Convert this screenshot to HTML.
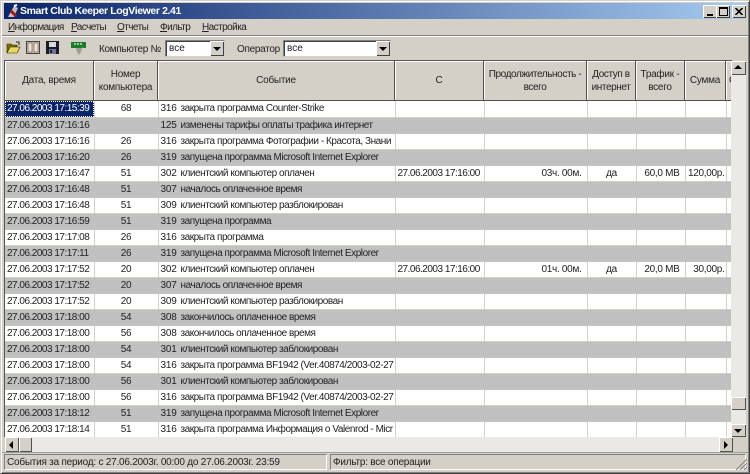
<!DOCTYPE html>
<html lang="ru"><head><meta charset="utf-8"><title>Smart Club Keeper LogViewer 2.41</title>
<style>
*{box-sizing:border-box}
html,body{margin:0;padding:0;background:#d4d0c8}
body{width:750px;height:474px;overflow:hidden;position:relative;font:10px "Liberation Sans",sans-serif;color:#222}
.a{position:absolute}
.win{left:0;top:0;width:750px;height:474px;background:#d4d0c8;border:1px solid #d4d0c8;border-right-color:#404040;border-bottom-color:#404040;box-shadow:inset 1px 1px 0 #fff,inset -1px -1px 0 #808080}
.title{left:4px;top:3px;width:742px;height:16px;background:linear-gradient(90deg,#0a246a,#a6caf0)}
.title span{position:absolute;left:16px;top:1px;color:#fff;font:bold 10.5px "Liberation Sans",sans-serif;letter-spacing:-.4px;line-height:14px;white-space:nowrap}
.cap{top:5px;width:14px;height:13px;background:#d4d0c8;box-shadow:inset 1px 1px 0 #fff,inset -1px -1px 0 #404040}
.menu span{position:absolute;top:21px;font-size:10px;letter-spacing:-.55px;line-height:13px;white-space:nowrap;color:#222}
.menu u{text-decoration:underline}
.hl{left:2px;width:746px;height:1px;background:#808080}
.hw{left:2px;width:746px;height:1px;background:#fff}
.lbl{top:43px;font-size:10px;letter-spacing:-.3px;line-height:13px;white-space:nowrap}
.combo{top:40px;height:17px;background:#fff;border:1px solid #808080;border-right-color:#d4d0c8;border-bottom-color:#d4d0c8;box-shadow:inset 1px 1px 0 #404040;font-size:10px;line-height:14px;padding:1px 0 0 3px}
.cb{top:41px;width:14px;height:15px;background:#d4d0c8;box-shadow:inset 1px 1px 0 #fff,inset -1px -1px 0 #404040}
.tri{position:absolute;width:0;height:0}
.down{border-left:4px solid transparent;border-right:4px solid transparent;border-top:4px solid #000}
.up{border-left:4px solid transparent;border-right:4px solid transparent;border-bottom:4px solid #000}
.left{border-top:4px solid transparent;border-bottom:4px solid transparent;border-right:4px solid #000}
.right{border-top:4px solid transparent;border-bottom:4px solid transparent;border-left:4px solid #000}
.gridbox{left:4px;top:60px;width:728px;height:377px;overflow:hidden;background:#d4d0c8;border-top:1px solid #555;border-left:1px solid #555}
.h{position:absolute;top:0;height:40px;background:#d4d0c8;border-right:1px solid #505050;border-bottom:1px solid #505050;box-shadow:inset 1px 1px 0 #fff;display:flex;align-items:center;justify-content:center;text-align:center;font-size:10px;letter-spacing:-.25px;line-height:13px;color:#222;overflow:hidden;white-space:nowrap}
table{position:absolute;left:0;top:40px;border-collapse:collapse;table-layout:fixed;width:727px}
td{height:16px;padding:0 2px;font-size:10px;letter-spacing:-.3px;line-height:15px;white-space:nowrap;overflow:hidden;border-right:1px solid #d4d0c8;border-bottom:1px solid #d4d0c8;background:#fff;color:#222}
td:first-child,td:nth-child(4){letter-spacing:-.5px}
tr.g td{background:#c0c0c0;border-right-color:#c0c0c0;border-bottom-color:#c4c4c4}
td.c{text-align:center}
td.r{text-align:right;padding-right:5px}
td.e{padding-left:2px;letter-spacing:-.45px}
td.e b{display:inline-block;width:20px;font-weight:normal;letter-spacing:-.2px}
td.sel{background:#0a246a;color:#fff;outline:1px dotted #fff;outline-offset:-1px;padding-left:2px}
.dither{background:#ebe9e5}
.btn{background:#d4d0c8;box-shadow:inset 1px 1px 0 #fff,inset -1px -1px 0 #505050}
.sunk{top:454px;height:16px;border:1px solid #808080;border-right-color:#fff;border-bottom-color:#fff;font-size:10px;letter-spacing:-.23px;line-height:13px;padding:1px 0 0 2px;white-space:nowrap;overflow:hidden;color:#222}
.wrap{filter:blur(.35px);position:absolute;left:0;top:0;width:750px;height:474px}
</style></head><body><div class="wrap">
<div class="a win"></div>
<div class="a title"><span>Smart Club Keeper LogViewer 2.41</span>
<svg class="a" style="left:2px;top:0" width="14" height="16" viewBox="0 0 14 16"><path d="M2 14 L8 3 L12 5 L8 14Z" fill="#c8c0c0"/><path d="M5 8 L10 13" stroke="#a01818" stroke-width="3"/><path d="M8 3 L11 2" stroke="#fff" stroke-width="2"/></svg></div>
<div class="a cap" style="left:703px"><div class="a" style="left:4px;top:9px;width:6px;height:2px;background:#000"></div></div>
<div class="a cap" style="left:716px"><div class="a" style="left:3px;top:2px;width:9px;height:9px;border:1px solid #000;border-top-width:2px"></div></div>
<div class="a cap" style="left:732px"><svg class="a" style="left:3px;top:3px" width="8" height="7" viewBox="0 0 8 7"><path d="M0.5 0 L7.5 7 M7.5 0 L0.5 7" stroke="#000" stroke-width="1.6"/></svg></div>
<div class="menu">
<span style="left:8px"><u>И</u>нформация</span>
<span style="left:71px"><u>Р</u>асчеты</span>
<span style="left:117px"><u>О</u>тчеты</span>
<span style="left:160px"><u>Ф</u>ильтр</span>
<span style="left:202px"><u>Н</u>астройка</span>
</div>
<div class="a hl" style="top:35px"></div><div class="a hw" style="top:36px"></div>
<svg class="a" style="left:6px;top:41px" width="15" height="13" viewBox="0 0 15 13"><path d="M1 12V3h4l1 1h5v2H4L1 12Z" fill="#807000" stroke="#302800" stroke-width=".6"/><path d="M1 12L4 6h10l-3 6Z" fill="#e8d860" stroke="#302800" stroke-width=".6"/><path d="M10 1l3 0 0 3" fill="none" stroke="#222" stroke-width="1"/></svg>
<svg class="a" style="left:26px;top:41px" width="14" height="13" viewBox="0 0 14 13"><rect x=".5" y=".5" width="13" height="12" fill="#c8c4b8" stroke="#444"/><rect x="2" y="2" width="4" height="9" fill="#e8e4d8" stroke="#806050" stroke-width=".7"/><rect x="8" y="2" width="4" height="9" fill="#e8e4d8" stroke="#806050" stroke-width=".7"/></svg>
<svg class="a" style="left:46px;top:41px" width="13" height="13" viewBox="0 0 13 13"><rect width="13" height="13" fill="#1c1c24"/><rect x="3" y="1" width="7" height="5" fill="#d8d8e0"/><rect x="3" y="8" width="7" height="5" fill="#7070a0"/><rect x="4" y="9" width="2" height="3" fill="#222"/></svg>
<svg class="a" style="left:71px;top:41px" width="15" height="15" viewBox="0 0 15 15"><rect x="0" y="1" width="15" height="6" fill="#1c7a2c"/><path d="M3 3h9" stroke="#b8e8b8" stroke-width="1.5" stroke-dasharray="2 1"/><path d="M5 7h6l-1 4-2 3-2-3Z" fill="#9aa090"/><path d="M11 6l2 2-2 2" fill="#c8c8c8"/></svg>
<div class="a lbl" style="left:99px">Компьютер №</div>
<div class="a combo" style="left:165px;width:60px">все</div>
<div class="a cb" style="left:210px"><div class="tri down" style="left:3px;top:6px"></div></div>
<div class="a lbl" style="left:237px">Оператор</div>
<div class="a combo" style="left:283px;width:108px">все</div>
<div class="a cb" style="left:376px"><div class="tri down" style="left:3px;top:6px"></div></div>

<div class="a gridbox">
<div class="h" style="left:0;width:89px">Дата, время</div>
<div class="h" style="left:89px;width:64px">Номер<br>компьютера</div>
<div class="h" style="left:153px;width:237px">Событие</div>
<div class="h" style="left:390px;width:89px">С</div>
<div class="h" style="left:479px;width:103px;letter-spacing:-.4px">Продолжительность -<br>всего</div>
<div class="h" style="left:582px;width:49px;letter-spacing:-.4px">Доступ в<br>интернет</div>
<div class="h" style="left:631px;width:49px">Трафик -<br>всего</div>
<div class="h" style="left:680px;width:41px">Сумма</div>
<div class="h" style="left:721px;width:20px;justify-content:flex-start;padding-left:3px">С</div>
<table>
<colgroup><col style="width:89px"><col style="width:64px"><col style="width:237px"><col style="width:89px"><col style="width:103px"><col style="width:49px"><col style="width:49px"><col style="width:41px"><col style="width:6px"></colgroup>
<tr><td class="sel">27.06.2003 17:15:39</td><td class="c">68</td><td class="e"><b>316</b>закрыта программа Counter-Strike</td><td></td><td></td><td></td><td></td><td></td><td></td></tr>
<tr class="g"><td>27.06.2003 17:16:16</td><td class="c"></td><td class="e"><b>125</b>изменены тарифы оплаты трафика интернет</td><td></td><td></td><td></td><td></td><td></td><td></td></tr>
<tr><td>27.06.2003 17:16:16</td><td class="c">26</td><td class="e"><b>316</b>закрыта программа Фотографии - Красота, Знани</td><td></td><td></td><td></td><td></td><td></td><td></td></tr>
<tr class="g"><td>27.06.2003 17:16:20</td><td class="c">26</td><td class="e"><b>319</b>запущена программа Microsoft Internet Explorer</td><td></td><td></td><td></td><td></td><td></td><td></td></tr>
<tr><td>27.06.2003 17:16:47</td><td class="c">51</td><td class="e"><b>302</b>клиентский компьютер оплачен</td><td>27.06.2003 17:16:00</td><td class="r">03ч. 00м.</td><td class="c">да</td><td class="r">60,0 MB</td><td class="r" style="padding-right:1px">120,00р.</td><td></td></tr>
<tr class="g"><td>27.06.2003 17:16:48</td><td class="c">51</td><td class="e"><b>307</b>началось оплаченное время</td><td></td><td></td><td></td><td></td><td></td><td></td></tr>
<tr><td>27.06.2003 17:16:48</td><td class="c">51</td><td class="e"><b>309</b>клиентский компьютер разблокирован</td><td></td><td></td><td></td><td></td><td></td><td></td></tr>
<tr class="g"><td>27.06.2003 17:16:59</td><td class="c">51</td><td class="e"><b>319</b>запущена программа</td><td></td><td></td><td></td><td></td><td></td><td></td></tr>
<tr><td>27.06.2003 17:17:08</td><td class="c">26</td><td class="e"><b>316</b>закрыта программа</td><td></td><td></td><td></td><td></td><td></td><td></td></tr>
<tr class="g"><td>27.06.2003 17:17:11</td><td class="c">26</td><td class="e"><b>319</b>запущена программа Microsoft Internet Explorer</td><td></td><td></td><td></td><td></td><td></td><td></td></tr>
<tr><td>27.06.2003 17:17:52</td><td class="c">20</td><td class="e"><b>302</b>клиентский компьютер оплачен</td><td>27.06.2003 17:16:00</td><td class="r">01ч. 00м.</td><td class="c">да</td><td class="r">20,0 MB</td><td class="r" style="padding-right:1px">30,00р.</td><td></td></tr>
<tr class="g"><td>27.06.2003 17:17:52</td><td class="c">20</td><td class="e"><b>307</b>началось оплаченное время</td><td></td><td></td><td></td><td></td><td></td><td></td></tr>
<tr><td>27.06.2003 17:17:52</td><td class="c">20</td><td class="e"><b>309</b>клиентский компьютер разблокирован</td><td></td><td></td><td></td><td></td><td></td><td></td></tr>
<tr class="g"><td>27.06.2003 17:18:00</td><td class="c">54</td><td class="e"><b>308</b>закончилось оплаченное время</td><td></td><td></td><td></td><td></td><td></td><td></td></tr>
<tr><td>27.06.2003 17:18:00</td><td class="c">56</td><td class="e"><b>308</b>закончилось оплаченное время</td><td></td><td></td><td></td><td></td><td></td><td></td></tr>
<tr class="g"><td>27.06.2003 17:18:00</td><td class="c">54</td><td class="e"><b>301</b>клиентский компьютер заблокирован</td><td></td><td></td><td></td><td></td><td></td><td></td></tr>
<tr><td>27.06.2003 17:18:00</td><td class="c">54</td><td class="e"><b>316</b>закрыта программа BF1942 (Ver.40874/2003-02-27</td><td></td><td></td><td></td><td></td><td></td><td></td></tr>
<tr class="g"><td>27.06.2003 17:18:00</td><td class="c">56</td><td class="e"><b>301</b>клиентский компьютер заблокирован</td><td></td><td></td><td></td><td></td><td></td><td></td></tr>
<tr><td>27.06.2003 17:18:00</td><td class="c">56</td><td class="e"><b>316</b>закрыта программа BF1942 (Ver.40874/2003-02-27</td><td></td><td></td><td></td><td></td><td></td><td></td></tr>
<tr class="g"><td>27.06.2003 17:18:12</td><td class="c">51</td><td class="e"><b>319</b>запущена программа Microsoft Internet Explorer</td><td></td><td></td><td></td><td></td><td></td><td></td></tr>
<tr><td>27.06.2003 17:18:14</td><td class="c">51</td><td class="e"><b>316</b>закрыта программа Информация о Valenrod - Micr</td><td></td><td></td><td></td><td></td><td></td><td></td></tr>
</table>
</div>

<div class="a dither" style="left:731px;top:61px;width:15px;height:376px"></div>
<div class="a btn" style="left:731px;top:61px;width:15px;height:14px"><div class="tri up" style="left:3px;top:4px"></div></div>
<div class="a btn" style="left:731px;top:397px;width:15px;height:13px"></div>
<div class="a btn" style="left:731px;top:424px;width:15px;height:13px"><div class="tri down" style="left:3px;top:5px"></div></div>
<div class="a dither" style="left:5px;top:437px;width:726px;height:15px"></div>
<div class="a btn" style="left:5px;top:437px;width:14px;height:15px"><div class="tri left" style="left:4px;top:4px"></div></div>
<div class="a btn" style="left:19px;top:437px;width:13px;height:15px"></div>
<div class="a btn" style="left:719px;top:437px;width:14px;height:15px"><div class="tri right" style="left:5px;top:4px"></div></div>
<div class="a" style="left:2px;top:452px;width:746px;height:1px;background:#a0a0a0"></div>
<div class="a sunk" style="left:4px;width:323px">События за период: с 27.06.2003г. 00:00 до 27.06.2003г. 23:59</div>
<div class="a sunk" style="left:330px;width:416px">Фильтр: все операции</div>
<svg class="a" style="left:735px;top:458px" width="12" height="12" viewBox="0 0 12 12"><path d="M1 12L12 1M5 12L12 5M9 12L12 9" stroke="#808080" stroke-width="1"/></svg>
</div></body></html>
